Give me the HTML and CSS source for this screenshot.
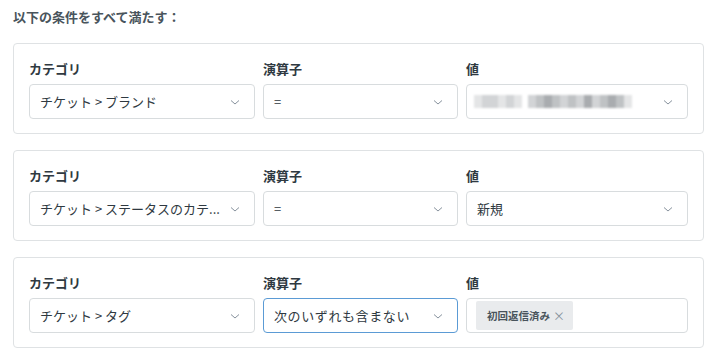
FILE: index.html
```html
<!DOCTYPE html>
<html>
  <head>
    <title>条件</title>
    <link rel="stylesheet" href="styles.css">
  </head>
  <body>
    <h2 class="heading">以下の条件をすべて満たす：</h2>

    <div class="conditionCard">
      <div class="field">
        <label>カテゴリ</label>
        <div class="select">
          <span class="selectText">チケット &gt; ブランド</span>
          <svg class="chevron" viewBox="0 0 12 12"><path d="M2 4.5l4 3.5 4-3.5"/></svg>
        </div>
      </div>
      <div class="field">
        <label>演算子</label>
        <div class="select">
          <span class="selectText">=</span>
          <svg class="chevron" viewBox="0 0 12 12"><path d="M2 4.5l4 3.5 4-3.5"/></svg>
        </div>
      </div>
      <div class="field">
        <label>値</label>
        <div class="select">
          <span class="blurred">
            <i class="px p4"></i><i class="px p3"></i><i class="px p3"></i><i class="px p4"></i><i class="px p3"></i><i class="px p4"></i>
            <i class="px gap"></i>
            <i class="px p3"></i><i class="px p2"></i><i class="px p1"></i><i class="px p2"></i><i class="px p3"></i><i class="px p2"></i><i class="px p3"></i><i class="px p1"></i><i class="px p3"></i><i class="px p2"></i><i class="px p1"></i><i class="px p2"></i><i class="px p4"></i>
          </span>
          <svg class="chevron" viewBox="0 0 12 12"><path d="M2 4.5l4 3.5 4-3.5"/></svg>
        </div>
      </div>
    </div>

    <div class="conditionCard">
      <div class="field">
        <label>カテゴリ</label>
        <div class="select">
          <span class="selectText">チケット &gt; ステータスのカテ...</span>
          <svg class="chevron" viewBox="0 0 12 12"><path d="M2 4.5l4 3.5 4-3.5"/></svg>
        </div>
      </div>
      <div class="field">
        <label>演算子</label>
        <div class="select">
          <span class="selectText">=</span>
          <svg class="chevron" viewBox="0 0 12 12"><path d="M2 4.5l4 3.5 4-3.5"/></svg>
        </div>
      </div>
      <div class="field">
        <label>値</label>
        <div class="select">
          <span class="selectText">新規</span>
          <svg class="chevron" viewBox="0 0 12 12"><path d="M2 4.5l4 3.5 4-3.5"/></svg>
        </div>
      </div>
    </div>

    <div class="conditionCard">
      <div class="field">
        <label>カテゴリ</label>
        <div class="select">
          <span class="selectText">チケット &gt; タグ</span>
          <svg class="chevron" viewBox="0 0 12 12"><path d="M2 4.5l4 3.5 4-3.5"/></svg>
        </div>
      </div>
      <div class="field">
        <label>演算子</label>
        <div class="select focused">
          <span class="selectText spaced">次のいずれも含まない</span>
          <svg class="chevron" viewBox="0 0 12 12"><path d="M2 4.5l4 3.5 4-3.5"/></svg>
        </div>
      </div>
      <div class="field">
        <label>値</label>
        <div class="select tagInput">
          <span class="tag">初回返信済み <span class="tagClose">×</span></span>
        </div>
      </div>
    </div>
  </body>
</html>
```

FILE: styles.css
```css
/* General Styles */
body {
  font-family: "Noto Sans CJK JP", "Noto Sans", sans-serif;
  margin: 0;
  padding: 7px 16px 0 13px;
  background-color: #ffffff;
  color: #2f3941;
}

.heading {
  font-size: 13px;
  font-weight: 700;
  line-height: 20px;
  color: #49545c;
  margin: 0 0 16px;
}

/* Condition Card */
.conditionCard {
  display: grid;
  grid-template-columns: 226px 195px 1fr;
  column-gap: 8px;
  border: 1px solid #dfe2e4;
  border-radius: 4px;
  padding: 15px 15px 14px;
  margin-bottom: 16px;
}

.field label {
  display: block;
  font-size: 13px;
  font-weight: 700;
  line-height: 20px;
  margin-bottom: 5px;
  color: #2f3941;
}

/* Select Styles */
.select {
  box-sizing: border-box;
  height: 35px;
  display: flex;
  align-items: center;
  border: 1px solid #d8dcde;
  border-radius: 4px;
  padding: 0 13px 0 10px;
  font-size: 13px;
  color: #2f3941;
}

.select.focused {
  border-color: #5b9bd5;
}

.selectText {
  flex: 1;
  white-space: nowrap;
  padding-right: 8px;
}

.selectText.spaced {
  letter-spacing: 0.6px;
}

.chevron {
  width: 12px;
  height: 12px;
  flex-shrink: 0;
  fill: none;
  stroke: #87929d;
  stroke-width: 1;
}

/* Blurred value */
.blurred {
  flex: 1;
  display: flex;
  height: 13px;
  margin-left: -3px;
  margin-right: 20px;
  filter: blur(1px);
}

.px {
  width: 8px;
  height: 13px;
}

.px.gap { width: 6px; }
.px.p1 { background-color: #a9acaf; }
.px.p2 { background-color: #bfc2c4; }
.px.p3 { background-color: #d2d4d6; }
.px.p4 { background-color: #e4e5e6; }

/* Tag input */
.tagInput {
  padding: 0 9px;
}

.tag {
  display: inline-flex;
  align-items: center;
  height: 29px;
  padding: 0 8px 0 11px;
  background-color: #e9ebed;
  border-radius: 2px;
  font-size: 10.5px;
  font-weight: 700;
  color: #49545c;
}

.tagClose {
  font-weight: 400;
  color: #87929d;
  margin-left: 3px;
  font-size: 12px;
}
```
